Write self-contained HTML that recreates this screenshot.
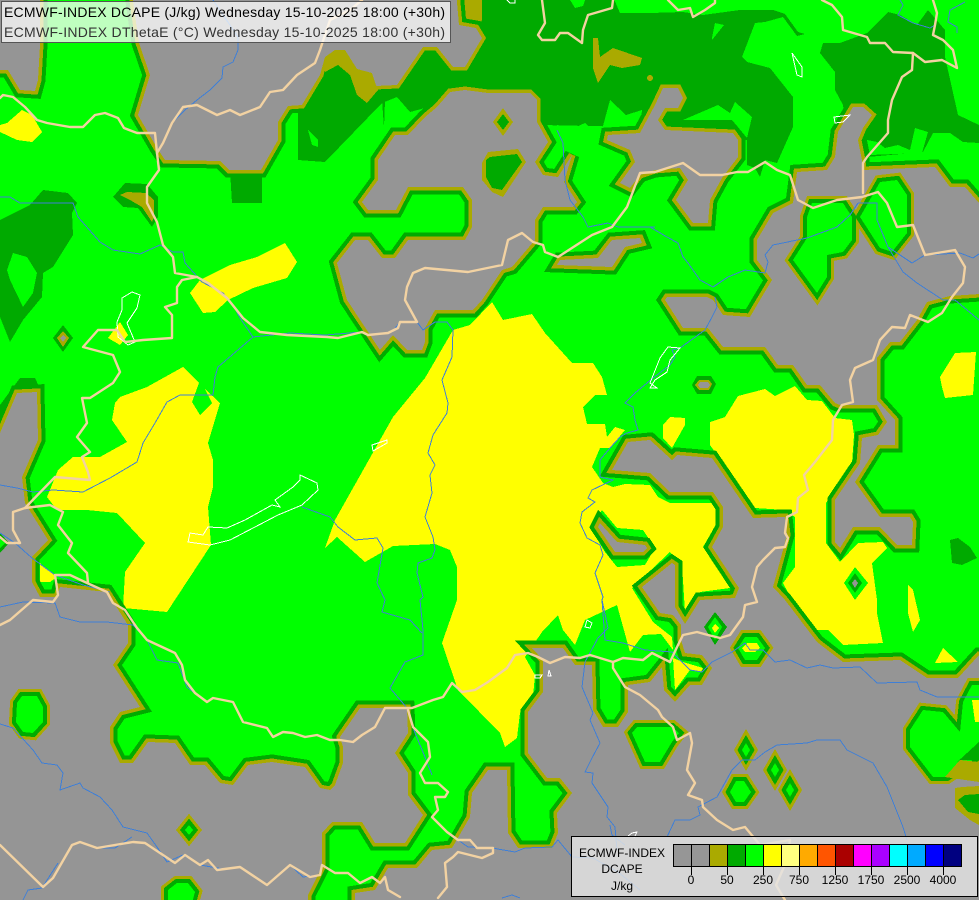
<!DOCTYPE html>
<html lang="en"><head><meta charset="utf-8"><title>ECMWF-INDEX DCAPE</title>
<style>html,body{margin:0;padding:0;background:#959595}svg{display:block}
.f{shape-rendering:crispEdges}
text{font-family:"Liberation Sans",Arial,sans-serif}
.t{stroke:#f2d2a2;stroke-width:2.4;fill:none;stroke-linejoin:round;stroke-linecap:round}
.r{stroke:#3f7fd6;stroke-width:1;fill:none;shape-rendering:crispEdges}
.l{stroke:#fff;stroke-width:1;fill:none;shape-rendering:crispEdges}
</style></head><body>
<svg xmlns="http://www.w3.org/2000/svg" width="979" height="900" viewBox="0 0 979 900">
<defs>
<g id="gr" stroke-linejoin="miter" stroke-miterlimit="3">
<polygon points="-20,-20 40,-20 40,45 38,80 35,91 20,90 8,70 -20,70"/>
<polygon points="130,-20 139,43 150,75 138,115 157,148 165,160 220,161 229,170 261,170 278,140 278,122 288,106 302,105 320,75 325,57 335,50 345,50 357,69 372,73 376,86 397,85 423,47 437,47 453,67 465,67 482,38 476,28 459,25 455,-20"/>
<polygon points="450,92 465,90 488,93 530,93 537,100 537,122 548,142 535,162 543,175 558,177 572,155 564,182 577,202 573,207 543,207 535,220 535,240 512,267 502,270 482,300 473,310 435,310 425,328 425,342 422,350 407,350 393,335 380,350 347,300 337,263 355,240 368,240 382,258 395,258 408,240 465,240 472,227 472,200 463,187 408,187 396,210 368,210 362,202 378,180 378,160 395,135 408,135 425,117 437,107"/>
<polygon points="557,265 560,260 598,258 612,240 640,238 642,243 625,247 612,267"/>
<polygon points="655,105 663,88 678,88 683,98 678,108 665,108 658,120 665,130 733,133 738,140 738,157 722,178 710,200 708,223 693,223 676,200 688,180 680,168 655,170 640,175 630,188 620,183 635,162 630,150 607,140 608,135 640,133"/>
<polygon points="853,107 863,107 872,115 863,128 858,140 862,160 863,170 935,167 950,187 965,187 979,203 995,203 995,293 950,296 927,302 917,320 900,342 890,342 877,358 877,400 895,420 895,445 878,445 855,482 880,517 910,517 913,522 912,545 897,545 880,527 853,527 840,548 835,542 835,500 860,463 862,438 878,435 887,422 877,405 852,405 840,405 835,403 820,385 807,385 793,365 778,365 765,347 723,347 708,328 683,328 665,300 667,297 707,297 713,300 723,315 750,317 760,300 772,280 757,260 757,240 773,213 793,203 797,172 827,170 835,157 838,132"/>
<polygon points="-20,430 0,433 17,393 37,392 38,440 22,477 25,503 48,540 32,557 32,582 40,597 57,597 60,587 107,592 128,625 128,643 113,665 140,707 120,712 110,727 110,743 120,763 133,763 148,742 175,743 190,765 205,765 220,783 233,785 248,765 272,762 305,767 320,788 330,790 335,785 343,763 343,747 340,737 360,708 407,708 408,733 395,753 408,773 408,795 423,815 405,843 375,843 362,822 332,822 322,833 322,867 308,895 308,920 -20,920"/>
<polygon points="355,920 355,893 375,890 388,868 417,868 432,850 452,848 470,817 472,793 488,770 507,770 508,833 518,848 552,848 558,833 557,813 572,793 560,778 547,778 528,753 528,712 543,692 543,660 532,648 563,648 575,665 592,665 593,710 603,727 618,727 628,712 628,685 650,682 662,667 664,690 675,702 690,685 702,685 712,668 702,655 685,653 681,640 681,625 673,615 660,613 642,587 672,563 675,565 675,607 685,624 700,600 735,598 739,588 712,547 723,527 723,507 713,492 670,492 650,473 612,470 628,442 650,440 672,460 677,455 712,458 753,518 785,517 787,535 773,587 785,600 817,642 843,662 900,660 927,678 958,678 979,655 995,655 995,920"/>
<polygon points="600,523 617,542 645,545 647,548 643,552 615,552 598,527"/>
</g>
<g id="isl" stroke-linejoin="miter" stroke-miterlimit="3">
<polygon points="17,703 22,696 37,696 43,707 43,722 33,733 23,732 16,722"/>
<polygon points="168,910 168,890 177,883 188,883 195,892 190,910"/>
<polygon points="632,733 637,727 672,727 679,733 672,742 660,762 645,762"/>
<polygon points="860,217 880,182 897,180 907,195 907,233 892,252 880,248"/>
<polygon points="793,260 807,238 807,217 812,203 843,203 852,217 852,240 843,252 827,255 827,277 817,293"/>
<polygon points="923,710 943,712 960,732 963,702 972,685 995,685 995,745 947,777 933,777 910,747 910,730"/>
<polygon points="738,648 745,637 757,637 765,648 757,660 745,660"/>
<polygon points="730,792 736,781 744,781 751,792 744,802 736,802"/>
<polygon points="746,743 750,750 746,757 742,750"/>
<polygon points="775,763 779,770 775,777 771,770"/>
<polygon points="790,783 794,790 790,797 786,790"/>
<polygon points="189,825 193,830 189,835 185,830"/>
</g>
</defs>
<g class="f">
<rect width="979" height="900" fill="#00ff00"/>
<polygon fill="#00aa00" points="298,100 298,160 325,162 382,103 397,97 410,112 425,108 450,92 530,93 540,125 640,127 650,135 700,135 747,140 747,165 755,168 760,177 765,160 777,163 793,127 793,97 770,68 747,62 742,57 755,23 765,22 783,17 797,36 805,34 798,32 785,14 773,10 740,10 703,15 683,12 650,13 620,13 610,-10 455,-10 440,40 330,55"/>
<polygon fill="#00aa00" points="820,53 823,43 840,43 867,33 888,12 900,15 917,25 928,10 945,30 945,57 958,115 979,125 979,143 963,142 950,133 933,133 923,152 867,157 860,170 850,170 845,120 843,105 835,90 835,72"/>
<polygon fill="#00aa00" points="230,170 262,170 262,203 232,203"/>
<g fill="#00ff00">
<polygon points="548,130 548,127 558,125 565,132 585,123 600,137 610,100 626,115 642,110 640,130"/>
<polygon points="683,120 718,105 730,113 735,102 752,117 747,138 732,120"/>
<polygon points="715,23 724,25 712,40 712,38"/>
<polygon points="567,-5 587,-5 583,6 575,8"/>
<polygon points="867,140 877,142 885,148 898,145 910,150 915,128 928,132 922,153 870,155"/>
<polygon points="308,130 318,140 318,147 312,145"/>
</g>
<polygon fill="#00aa00" points="382,100 385,100 384,128"/>
<polygon fill="#aaaa00" points="593,38 598,38 600,57 613,48 642,58 640,65 622,68 610,65 598,83 593,68"/>
<circle cx="650" cy="78" r="3" fill="#aaaa00"/>
<polygon fill="#aaaa00" points="455,-5 482,-5 482,20 478,27 460,27"/>
<polygon fill="#00aa00" points="0,220 30,205 43,190 68,193 77,203 72,213 73,235 53,267 43,273 42,297 23,320 10,342 0,317"/>
<polygon fill="#00ff00" points="13,253 27,257 37,273 33,293 23,307 10,280 7,270"/>
<polygon fill="#00aa00" points="0,405 20,378 35,378 43,395 43,440 28,477 0,490"/>
<polygon fill="#00aa00" points="113,197 125,183 147,184 158,197 158,217 152,227 138,208 123,207"/>
<polygon fill="#aaaa00" points="120,195 127,192 146,193 154,200 154,217 152,222 142,207 130,200"/>
<polygon fill="#00aa00" points="63,325 73,338 63,352 53,338"/>
<polygon fill="#aaaa00" points="63,331 69,338 63,347 57,338"/>
<polygon fill="#959595" points="63,335 66,338 63,342 60,338"/>
<polygon fill="#00aa00" points="950,540 958,538 970,547 977,558 962,565 952,563"/>
<g fill="#ffff00">
<polygon points="0,125 7,123 22,110 32,115 42,132 32,142 17,140 0,132"/>
<polygon points="190,293 200,280 230,265 257,257 285,243 297,262 287,278 253,288 228,300 215,312 203,313"/>
<polygon points="108,338 120,322 128,335 120,345"/>
<polygon points="115,403 120,397 147,387 183,367 199,383 192,402 200,415 212,403 205,389 220,403 208,443 213,460 213,487 208,507 211,545 167,612 123,608 125,572 145,543 117,513 87,510 57,510 47,497 58,470 73,457 100,457 127,442 112,420"/>
<polygon points="325,548 335,520 393,417 425,378 453,330 470,325 492,302 503,320 532,314 545,333 572,363 593,363 602,377 607,395 595,395 583,407 587,424 605,424 607,437 615,427 625,430 610,448 600,448 592,467 603,483 613,487 625,484 650,485 658,497 670,503 715,503 717,523 703,547 730,588 700,592 685,612 682,565 670,552 632,588 653,622 672,637 673,650 661,634 643,635 630,652 617,605 585,620 575,645 563,630 558,615 542,632 525,657 535,675 533,697 520,713 517,738 505,747 500,733 458,690 442,643 457,600 457,567 450,550 435,544 393,546 365,562 337,537"/>
<polygon points="710,422 725,417 738,396 765,389 775,396 795,386 807,400 822,401 835,418 852,420 854,435 852,463 826,503 826,543 840,562 858,543 883,542 887,548 872,563 877,600 877,613 883,643 843,645 828,630 813,630 792,600 783,583 795,567 795,517 785,510 755,508 710,445"/>
<polygon points="940,377 955,353 976,352 973,395 945,398 942,387"/>
<polygon points="663,425 670,417 685,418 685,425 672,448 663,438"/>
<polygon points="908,585 913,590 920,620 913,632 908,613"/>
<polygon points="943,648 958,662 935,663"/>
<polygon points="673,658 675,690 690,670 703,672 703,668 683,662"/>
<polygon points="40,563 57,577 50,582 40,582"/>
</g>
<polygon fill="#00ff00" points="590,527 602,510 617,528 643,530 655,548 645,565 617,567 605,552"/>
<polygon fill="#00ff00" points="855,567 868,583 855,600 844,583"/>
<polygon fill="#00aa00" points="855,573 862,583 855,593 848,583"/>
<polygon fill="#959595" points="855,579 858,583 855,588 852,583"/>
<use href="#gr" fill="#00aa00" stroke="#00aa00" stroke-width="15"/>
<use href="#gr" fill="#aaaa00" stroke="#aaaa00" stroke-width="7"/>
<use href="#gr" fill="#959595" stroke="none"/>
<polygon fill="#aaaa00" points="325,72 338,65 350,75 357,95 367,103 378,90 376,85 372,73 357,69 345,50 335,50 325,57"/>
<use href="#isl" fill="#aaaa00" stroke="#aaaa00" stroke-width="14"/>
<use href="#isl" fill="#00aa00" stroke="#00aa00" stroke-width="8"/>
<use href="#isl" fill="#00ff00" stroke="none"/>
<polygon fill="#ffff00" points="742,648 747,643 757,643 760,648 755,652 745,652"/>
<polygon fill="#ffff00" points="972,700 979,700 979,722 975,722"/>
<polygon fill="#aaaa00" points="503,108 513,122 503,136 493,122"/>
<polygon fill="#00aa00" points="503,114 509,122 503,130 497,122"/>
<polygon fill="#aaaa00" points="488,152 518,149 526,162 503,197 492,192 482,180 482,163"/>
<polygon fill="#00aa00" points="490,157 517,154 522,162 502,190 492,188 486,177 486,160"/>
<polygon fill="#00aa00" points="692,385 697,376 711,376 716,384 711,394 697,394"/>
<polygon fill="#aaaa00" points="695,385 699,380 709,380 712,384 709,390 699,390"/>
<polygon fill="#959595" points="698,385 700,382 708,382 710,385 708,388 700,388"/>
<polygon fill="#00aa00" points="704,627 715,612 727,627 715,645"/>
<polygon fill="#00ff00" points="708,627 715,617 722,627 715,640"/>
<polygon fill="#ffff00" points="712,628 715,624 719,628 715,633"/>
<polygon fill="#aaaa00" points="955,788 962,787 979,786 979,825 970,820 955,808"/>
<polygon fill="#00aa00" points="958,800 965,795 979,794 979,814 968,812"/>
<polygon fill="#aaaa00" points="945,777 960,760 979,762 979,782"/>
<polygon fill="#00aa00" points="955,764 979,742 979,760 960,760"/>
<polygon fill="#00aa00" points="0,533 9,543 0,553"/>
<polygon fill="#00ff00" points="0,538 5,543 0,548"/>
</g>
<g class="r">
<polyline points="213,0 238,37 238,50 233,62 223,67 222,78 210,90 197,100 185,110 172,123 163,143"/>
<polyline points="0,197 10,197 20,203 73,203 78,217 100,242 113,250 140,254 160,245 173,252 183,252 185,263 202,282 223,293 233,305 240,318 253,337 232,355 218,367 215,377 213,395 180,395 167,402 155,423 143,443 137,462 110,478 83,492 53,490 33,492 17,488 0,485"/>
<polyline points="253,337 290,333 325,335 362,332 368,335 392,332 400,322 417,322 423,330 435,322 447,322 453,330 452,357 442,380 448,403 447,413 433,435 428,453 435,465 430,475 432,493 425,517 433,537 435,550 432,558 418,563 417,573 423,597 420,600 423,630 423,655 405,662 390,688 407,708 415,733 425,757 432,775"/>
<polyline points="302,507 330,517 338,527 355,540 377,538 383,548 377,583 385,600 382,612 410,620 422,633"/>
<polyline points="653,378 635,393 625,403 633,407 635,420 638,430 627,433 620,437 610,448 600,460 600,477 613,480 592,490 588,498 595,502 582,512 580,523 587,538 600,545 603,555 595,573 603,597 602,600 608,628 598,638 585,662 582,687 593,713 590,720 600,743 592,758 585,772 593,773 592,783 608,807 607,817 615,827 617,850"/>
<polyline points="602,600 605,640 623,643 645,650 672,652 690,670 702,672 712,662 732,652 745,643 750,650 763,650 775,662 790,660 807,668 820,665 833,668 860,667 877,683 917,682 920,690 937,697 979,697"/>
<polyline points="653,378 657,375 670,365 675,357 672,350 680,348 705,330 712,317 717,307 715,297"/>
<polyline points="650,227 667,237 678,243 683,257 688,263 700,280 713,287 728,277 745,270 765,273 768,262 765,255 773,245 807,238 837,227 850,215 858,203"/>
<polyline points="858,203 877,203 877,220 888,247 903,272 917,283 943,300 955,300 979,320"/>
<polyline points="888,247 912,263 925,255 960,253 973,258 979,254"/>
<polyline points="900,0 903,5 898,15 913,23 930,28 935,25"/>
<polyline points="965,2 950,10 948,22 957,27 957,33"/>
<polyline points="557,130 563,143 565,180 570,200 583,217 588,227 608,223 618,227 655,227"/>
<polyline points="0,607 23,602 55,603 60,617 80,622 107,622 133,625 147,640 157,660 178,663 187,687 203,700"/>
<polyline points="0,533 15,543 32,558 55,575 83,585 110,592"/>
<polyline points="0,724 13,728 33,750 42,763 57,765 63,773 60,790 80,783 83,788 100,797 112,810 123,827 147,833 157,847 167,862 183,855 200,865 223,869 240,867 267,885 290,865 303,877 320,875"/>
<polyline points="132,837 115,848 97,848"/>
<polyline points="58,863 42,888 28,890 23,900"/>
<polyline points="448,833 468,847 492,848 515,852 525,848 552,847 558,840 572,857 593,858 618,872 640,890"/>
<polyline points="610,825 612,835 625,845"/>
<polyline points="667,837 675,820 690,820 700,815 698,807 717,797 732,770 742,760 755,760 765,752 777,745 807,743 817,740 840,740 847,750 873,763 887,787 903,827 907,840"/>
<polyline points="502,898 512,895 520,898"/>
</g>
<g class="l">
<polygon points="300,475 317,483 318,490 302,505 278,515 230,540 210,545 188,542 190,533 203,535 208,527 227,528 245,520 272,505 280,507 275,500 293,487 300,480"/>
<polygon points="132,292 140,295 137,308 127,323 135,342 128,345 118,337 117,322 122,310 122,298"/>
<polygon points="792,53 802,67 802,77 797,75"/>
<polygon points="834,117 850,115 843,122 835,123"/>
<polygon points="372,445 387,440 387,443 373,451"/>
<polygon points="668,347 680,348 670,360 667,372 655,380 650,388 657,388 650,383 660,358"/>
<polygon points="585,627 587,620 592,623 590,628"/>
<polygon points="535,675 542,675 540,678 535,678"/>
<polygon points="549,670 551,676 548,676"/>
<polyline points="628,836 632,833 637,832 634,838"/>
<polyline points="507,0 510,3 515,3 515,0"/>
</g>
<g class="t">
<polyline points="0,98 3,95 13,97 25,107 37,120 47,123 70,127 83,127 95,115 105,113 118,118 124,128 137,133 155,133 157,153 159,170 147,187 147,203 157,222 163,245 173,257 175,273 197,277 208,283 227,298 243,318 260,332 287,335 327,337 338,338 362,332 368,335 388,333 398,328 400,322 417,322 405,300 407,287 413,273 425,268 468,272 502,265 508,240 522,233 533,242 543,245 545,252 558,257 592,235 612,227 627,207 640,173 655,172 683,163 700,175 722,175 737,172 748,172 765,162 777,170 790,175 798,200 813,208 837,200 862,197 878,192 887,203 897,227 913,225 925,255 955,250 965,267 963,283 952,297 942,313 928,322 910,315 905,328 892,327 880,340 873,360 855,368 850,380 853,402 842,405 833,420 832,440 815,462 804,475 808,490 798,498 797,512 787,517 785,533 788,538 785,547 775,548 763,560 757,567 752,587 757,602 745,605 743,617 730,635 720,638 708,635 697,632 683,635 678,645 670,662 652,653 643,660 623,658 613,662 590,655 580,658 565,657 550,663 538,657 528,653 515,655 507,668 488,682 475,690 462,692 452,683 443,697 433,700 412,708 385,708 375,727 362,735 353,742 340,740 330,740 317,735 305,737 293,733 283,732 273,737 267,728 243,722 233,702 213,698 207,702 195,693 185,680 182,665 175,653 147,640 137,628 125,610 113,603 107,592 87,583 70,575 55,575 58,595 53,602 33,600 10,620 0,625"/>
<polyline points="88,583 87,573 68,553 72,543 58,525 63,512 50,505 25,508 13,512 13,530 20,543 7,543 0,537"/>
<polyline points="25,508 55,477 90,480 88,472 82,457 90,452 77,437 87,423 82,398 90,398 113,383 120,372 113,355 83,347 98,330 117,330 125,342 143,340 172,338 172,315 165,307 177,303 177,287 182,280 197,277"/>
<polyline points="0,845 43,887 53,878 72,845 80,842 97,848 133,842 145,843 175,863 185,855 200,865 208,860 217,870 240,867 267,885 290,865 310,877 320,875 322,865 335,873 348,873 360,883 372,877 380,883 385,877 388,890 400,897"/>
<polyline points="408,710 413,727 428,742 430,757 420,773 425,783 438,783 448,792 445,797 435,797 438,810 432,817 447,832 458,840 470,840 477,848 493,848 493,853 482,858 458,852 453,857 445,863 447,887 438,898"/>
<polyline points="613,662 613,668 625,687 640,695 658,710 662,717 673,727 677,740 690,733 692,743 687,770 695,783 688,795 702,800 703,807 717,820 733,830 745,827 760,845 790,840 787,860 776,885 785,900"/>
<polyline points="362,0 350,10 330,20 320,50 315,63 297,75 283,90 270,92 260,107 240,115 230,110 217,115 197,105 183,107 172,123 163,143 157,153"/>
<polyline points="542,0 545,23 538,35 542,40 555,40 560,33 568,33 582,43 583,30 588,15 612,8 613,0"/>
<polyline points="668,0 678,10 690,8 693,17 705,10 715,3 715,0"/>
<polyline points="822,0 832,5 842,17 843,30 867,37 870,43 885,43 893,52 913,53 925,62 942,60 957,68 953,50 943,40 933,35 935,25 937,13 933,0"/>
<polyline points="913,53 912,70 902,77 892,100 888,120 888,133 867,157 863,163 863,193"/>
</g>
<rect x="1.5" y="1.5" width="449" height="41" fill="#fff" fill-opacity=".75" stroke="#555" stroke-width="1" class="f"/>
<text x="4" y="17" font-size="14" fill="#000" textLength="441" lengthAdjust="spacing">ECMWF-INDEX DCAPE (J/kg) Wednesday 15-10-2025 18:00 (+30h)</text>
<text x="4" y="37" font-size="14" fill="#333" textLength="441" lengthAdjust="spacing">ECMWF-INDEX DThetaE (°C) Wednesday 15-10-2025 18:00 (+30h)</text>
<g class="f">
<rect x="571.5" y="836.5" width="406" height="60" fill="#e4e4e4" fill-opacity=".82" stroke="#000" stroke-width="1"/>
<g stroke="#000" stroke-width="1">
<rect x="673.5" y="844.5" width="18" height="22" fill="#969696"/>
<rect x="691.5" y="844.5" width="18" height="22" fill="#969696"/>
<rect x="709.5" y="844.5" width="18" height="22" fill="#aaaa00"/>
<rect x="727.5" y="844.5" width="18" height="22" fill="#00aa00"/>
<rect x="745.5" y="844.5" width="18" height="22" fill="#00ff00"/>
<rect x="763.5" y="844.5" width="18" height="22" fill="#ffff00"/>
<rect x="781.5" y="844.5" width="18" height="22" fill="#ffff80"/>
<rect x="799.5" y="844.5" width="18" height="22" fill="#ffaa00"/>
<rect x="817.5" y="844.5" width="18" height="22" fill="#ff5500"/>
<rect x="835.5" y="844.5" width="18" height="22" fill="#aa0000"/>
<rect x="853.5" y="844.5" width="18" height="22" fill="#ff00ff"/>
<rect x="871.5" y="844.5" width="18" height="22" fill="#aa00ff"/>
<rect x="889.5" y="844.5" width="18" height="22" fill="#00ffff"/>
<rect x="907.5" y="844.5" width="18" height="22" fill="#00aaff"/>
<rect x="925.5" y="844.5" width="18" height="22" fill="#0000ff"/>
<rect x="943.5" y="844.5" width="18" height="22" fill="#000080"/>
<path d="M691.5 866v9M727.5 866v9M763.5 866v9M799.5 866v9M835.5 866v9M871.5 866v9M907.5 866v9M943.5 866v9" fill="none"/>
</g>
</g>
<g font-size="12" fill="#000" text-anchor="middle">
<text x="622" y="857">ECMWF-INDEX</text>
<text x="622" y="873">DCAPE</text>
<text x="622" y="890">J/kg</text>
<text x="691" y="884">0</text>
<text x="727" y="884">50</text>
<text x="763" y="884">250</text>
<text x="799" y="884">750</text>
<text x="835" y="884">1250</text>
<text x="871" y="884">1750</text>
<text x="907" y="884">2500</text>
<text x="943" y="884">4000</text>
</g>
</svg>
</body></html>
